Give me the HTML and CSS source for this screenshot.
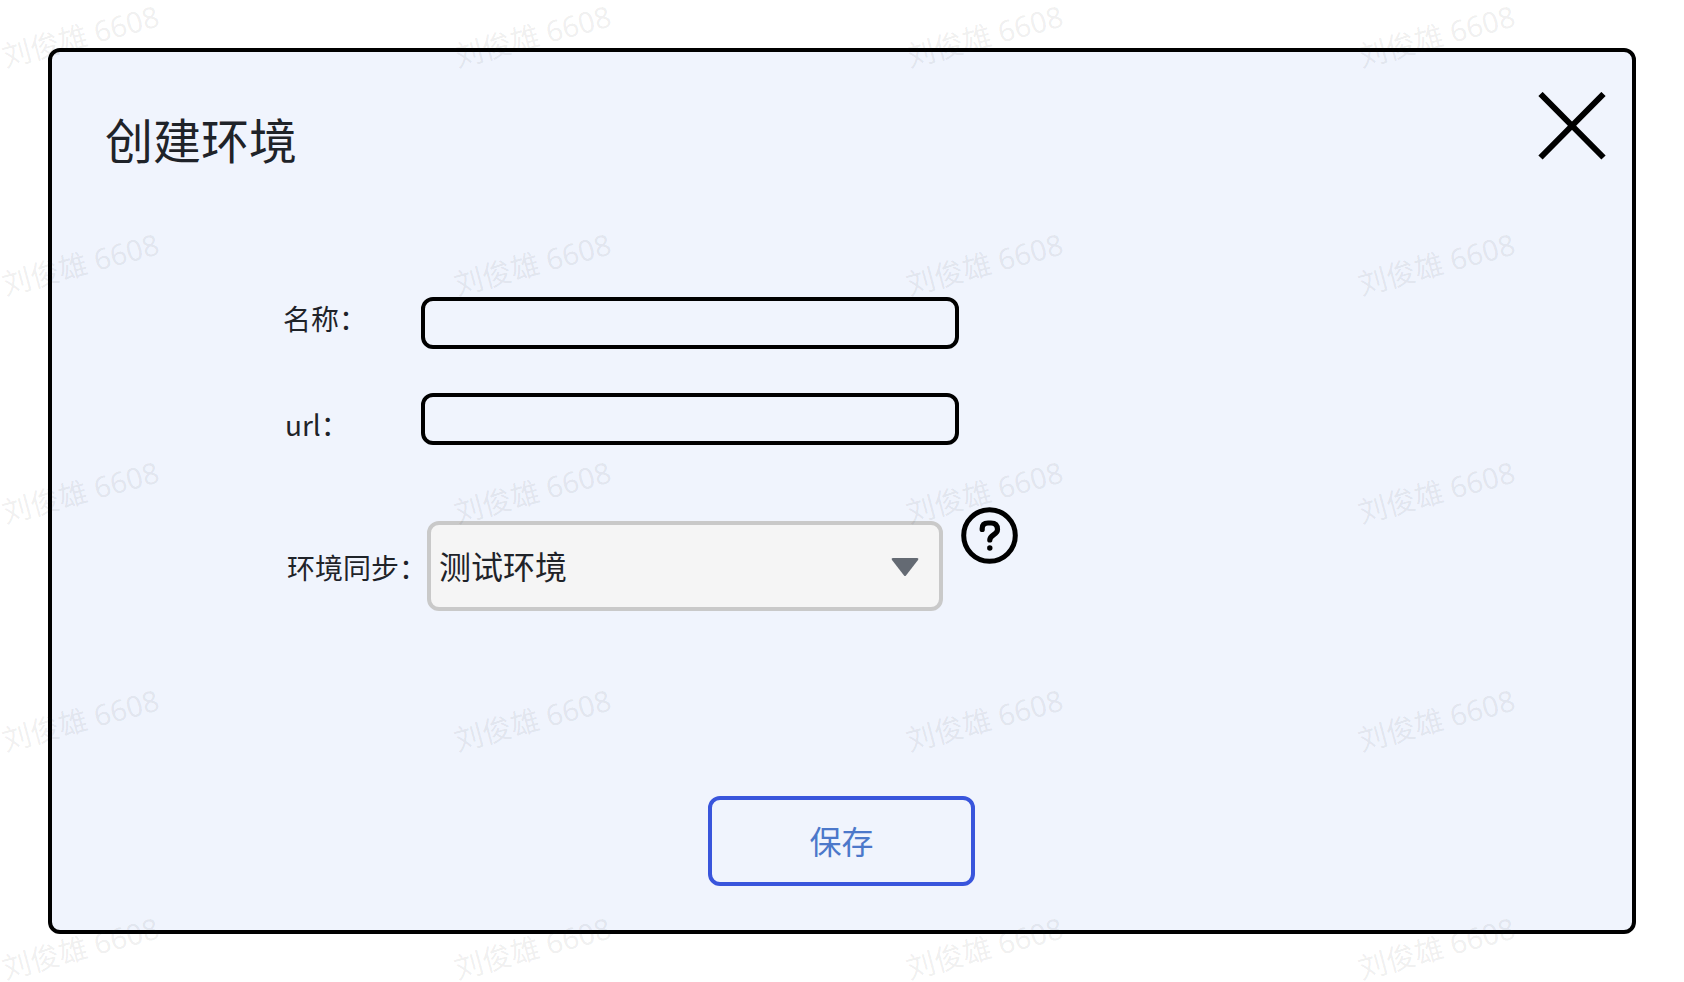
FILE: index.html
```html
<!DOCTYPE html>
<html lang="zh-CN">
<head>
<meta charset="utf-8">
<meta name="viewport" content="width=device-width, initial-scale=1">
<title>创建环境</title>
<link rel="stylesheet" href="styles.css">
</head>
<body class="page">
<main class="dialog" role="dialog" aria-labelledby="dialog-title">
  <header class="dialog-header">
    <h1 class="dialog-title" id="dialog-title">创建环境</h1>
    <button class="close-button" type="button" aria-label="关闭">
      <svg class="icon" viewBox="0 0 68 68" aria-hidden="true"><path d="M2.500 2 65.500 65.500M65.500 2 2.500 65.500" fill="none" stroke="#000" stroke-width="6"/></svg>
    </button>
  </header>
  <form class="env-form">
    <div class="fields">
      <div class="field">
        <label class="label" for="name">名称：</label>
        <input class="text-input" id="name" type="text">
      </div>
      <div class="field">
        <label class="label label-url" for="url">url：</label>
        <input class="text-input" id="url" type="text">
      </div>
      <div class="field field-sync">
        <label class="label label-sync" for="sync">环境同步：</label>
        <div class="sync-control">
          <div class="select-wrap">
            <select class="select" id="sync"><option>测试环境</option></select>
            <svg class="select-arrow" viewBox="0 0 28 20" aria-hidden="true"><path d="M2 1h24q2 0 1 2L15 18.5q-1 1.2-2 0L1 3Q0 1 2 1z" fill="#646a73"/></svg>
          </div>
          <button class="help-button" type="button" aria-label="帮助">
            <svg class="icon" viewBox="0 0 58 58" aria-hidden="true">
              <circle cx="28.500" cy="28.500" r="25.800" fill="none" stroke="#000" stroke-width="5"/>
              <path d="M21.200 22.500V21.500Q21.200 16 27 16H30Q36.500 16 36.500 22.500C36.500 28 28.800 27.500 28.800 33" fill="none" stroke="#000" stroke-width="5.200" stroke-linecap="round"/>
              <circle cx="28.800" cy="41" r="2.700"/>
            </svg>
          </button>
        </div>
      </div>
    </div>
    <button class="save-button" type="submit">保存</button>
  </form>
</main>
<div class="watermark" aria-hidden="true">
  <span class="mark">刘俊雄 6608</span><span class="mark">刘俊雄 6608</span><span class="mark">刘俊雄 6608</span><span class="mark">刘俊雄 6608</span>
  <span class="mark">刘俊雄 6608</span><span class="mark">刘俊雄 6608</span><span class="mark">刘俊雄 6608</span><span class="mark">刘俊雄 6608</span>
  <span class="mark">刘俊雄 6608</span><span class="mark">刘俊雄 6608</span><span class="mark">刘俊雄 6608</span><span class="mark">刘俊雄 6608</span>
  <span class="mark">刘俊雄 6608</span><span class="mark">刘俊雄 6608</span><span class="mark">刘俊雄 6608</span><span class="mark">刘俊雄 6608</span>
  <span class="mark">刘俊雄 6608</span><span class="mark">刘俊雄 6608</span><span class="mark">刘俊雄 6608</span><span class="mark">刘俊雄 6608</span>
</div>
</body>
</html>
```
FILE: styles.css
```css
* {
  box-sizing: border-box;
}

.page {
  position: relative;
  display: flex;
  min-height: 100vh;
  margin: 0;
  padding: 48px;
  background: #fff;
  color: #1f2329;
  font-family: "Noto Sans CJK SC", sans-serif;
}

.dialog {
  display: flex;
  flex: 1;
  flex-direction: column;
  min-width: 0;
  border: 4px solid #000;
  border-radius: 12px;
  background: #f0f4fd;
}

.dialog-header {
  display: flex;
  align-items: flex-start;
  justify-content: space-between;
  padding: 40px 26px 0 53px;
}

.dialog-title {
  margin: 0;
  padding-top: 10px;
  font-size: 48px;
  font-weight: 400;
  line-height: 72px;
}

.close-button,
.help-button {
  flex: none;
  padding: 0;
  border: 0;
  background: none;
  cursor: pointer;
}

.close-button {
  width: 68px;
  height: 68px;
}

.help-button {
  width: 58px;
  height: 58px;
}

.icon {
  display: block;
  width: 100%;
  height: 100%;
}

.env-form {
  display: flex;
  flex: 1;
  flex-direction: column;
  align-items: center;
  padding: 123px 20px 44px 231px;
}

.fields {
  display: flex;
  flex-direction: column;
  align-self: stretch;
  gap: 44px;
}

.field {
  display: grid;
  grid-template-columns: 138px minmax(0, 538px);
  align-items: start;
}

.field-sync {
  grid-template-columns: 144px minmax(0, 592px);
  padding-top: 18px;
}

.label {
  font-size: 28px;
  line-height: 42px;
  white-space: nowrap;
}

.label-url {
  padding: 10px 0 0 2px;
}

.label-sync {
  padding: 39px 0 0 4px;
}

.text-input {
  width: 100%;
  height: 52px;
  padding: 0 12px;
  border: 4px solid #000;
  border-radius: 12px;
  background: transparent;
  color: inherit;
  font: inherit;
  font-size: 28px;
}

.sync-control {
  display: flex;
  align-items: flex-start;
  gap: 18px;
}

.select-wrap {
  position: relative;
  flex: 1;
  min-width: 0;
  margin-top: 14px;
}

.select {
  display: block;
  width: 100%;
  height: 90px;
  padding: 0 56px 2px 8px;
  appearance: none;
  border: 4px solid #c9c9c9;
  border-radius: 12px;
  background: #f5f5f5;
  color: inherit;
  font: inherit;
  font-size: 32px;
}

.select-arrow {
  position: absolute;
  top: 36px;
  right: 24px;
  width: 28px;
  height: 20px;
  pointer-events: none;
}

.save-button {
  width: 267px;
  height: 90px;
  margin: auto 212px 0 0;
  padding: 0 0 2px;
  border: 4px solid #3955dc;
  border-radius: 12px;
  background: transparent;
  color: #4c78ca;
  font: inherit;
  font-size: 32px;
  cursor: pointer;
}

.watermark {
  position: absolute;
  inset: 0;
  display: grid;
  grid-template-columns: repeat(4, 452px);
  grid-auto-rows: 228px;
  overflow: hidden;
  color: rgba(31, 35, 41, 0.08);
  font-family: "Noto Sans", "Noto Sans CJK SC", sans-serif;
  font-size: 29px;
  line-height: 44px;
  pointer-events: none;
}

.mark {
  align-self: start;
  justify-self: start;
  margin-top: 14px;
  white-space: nowrap;
  transform: rotate(-15deg);
}
```
